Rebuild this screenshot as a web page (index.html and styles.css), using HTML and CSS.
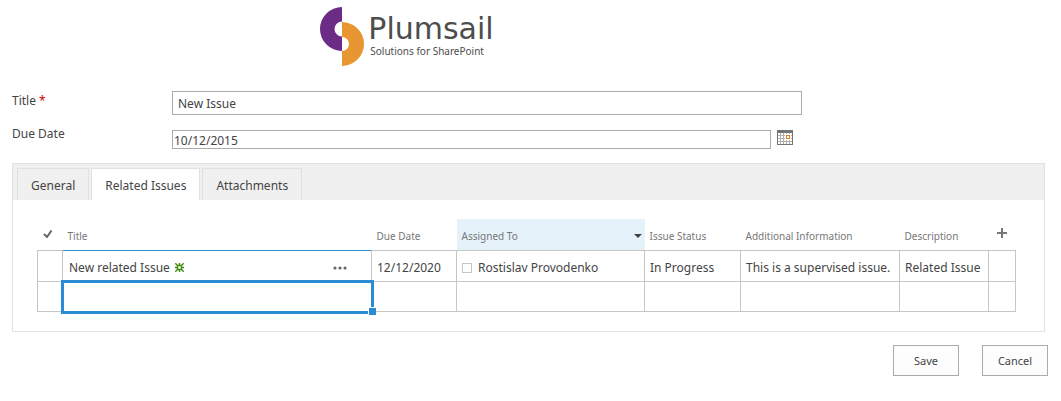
FILE: index.html
```html
<!DOCTYPE html>
<html lang="en">
<head>
    <meta charset="UTF-8">
    <meta name="viewport" content="width=device-width, initial-scale=1.0">
    <title>New Issue</title>
    <link rel="stylesheet" href="styles.css">
</head>
<body>
    <form class="issue-form">
        <div class="form-head">
            <div class="logo">
                <svg class="logo-mark" width="44" height="60" viewBox="0 0 44 60" aria-hidden="true">
                    <path fill="#6a2c85" d="M22 0a22 22 0 0 0 0 44V29.500a7.500 7.500 0 0 1 0-15z"/>
                    <path fill="#e79632" d="M22 15a22 22 0 0 1 0 44V44a7 7 0 0 0 0-14z"/>
                </svg>
                <div class="logo-text">
                    <span class="logo-name">Plumsail</span>
                    <span class="logo-tagline">Solutions for SharePoint</span>
                </div>
            </div>
            <div class="field">
                <label for="title">Title <span class="required">*</span></label>
                <input class="text-input" type="text" id="title" value="New Issue">
            </div>
            <div class="field">
                <label for="dueDate">Due Date</label>
                <input class="date-input" type="text" id="dueDate" value="10/12/2015">
                <button type="button" class="calendar-button" aria-label="Pick a date">
                    <svg width="16" height="15" viewBox="0 0 16 15" shape-rendering="crispEdges">
                        <path fill="none" stroke="#b0b0b0" d="M3.500 3v11M6.500 3v11M9.500 3v11M12.500 3v11M1 5.500h14M1 8.500h14M1 11.500h14"/>
                        <path fill="#fff" d="M8 4h6v6H8z"/>
                        <path fill="none" stroke="#e87b1e" d="M9.500 5.500h3v3h-3z"/>
                        <path fill="#737373" d="M0 0h16v15H0zM1 3v11h14V3z" fill-rule="evenodd"/>
                    </svg>
                </button>
            </div>
        </div>

        <div class="panel">
            <div class="tabs" role="tablist">
                <button type="button" class="tab" role="tab">General</button>
                <button type="button" class="tab active" role="tab" aria-selected="true">Related Issues</button>
                <button type="button" class="tab" role="tab">Attachments</button>
            </div>
            <div class="tab-content">
                <table class="grid">
                    <colgroup>
                        <col class="col-check">
                        <col>
                        <col class="col-date">
                        <col class="col-person">
                        <col class="col-status">
                        <col class="col-info">
                        <col class="col-description">
                        <col class="col-add">
                    </colgroup>
                    <thead>
                        <tr>
                            <th class="icon-cell check-cell">
                                <svg width="10" height="8" viewBox="0 0 10 8"><path fill="none" stroke="#666" stroke-width="2" d="M1 4l3 3 4.500-6.500"/></svg>
                            </th>
                            <th>Title</th>
                            <th>Due Date</th>
                            <th class="sorted">
                                <div class="cell-row">Assigned To
                                    <svg width="8" height="4" viewBox="0 0 8 4"><path fill="#444" d="M0 0h8L4 4z"/></svg>
                                </div>
                            </th>
                            <th>Issue Status</th>
                            <th>Additional Information</th>
                            <th>Description</th>
                            <th class="icon-cell">
                                <svg width="10" height="10" viewBox="0 0 10 10" shape-rendering="crispEdges"><path fill="#777" d="M4 0h2v4h4v2H6v4H4V6H0V4h4z"/></svg>
                            </th>
                        </tr>
                    </thead>
                    <tbody>
                        <tr>
                            <td></td>
                            <td class="title-cell">
                                <div class="cell-row">
                                    <span class="item-title">New related Issue
                                        <svg width="9" height="9" viewBox="0 0 9 9"><path fill="none" stroke="#3f8c0c" stroke-width="1.400" d="M2.500 2.500h4v4h-4zM.3.300l2.200 2.200M8.700.300L6.500 2.500M.3 8.700l2.200-2.200M8.700 8.700L6.500 6.500M4.500 0v2M4.500 7v2M0 4.500h2M7 4.500h2"/></svg>
                                    </span>
                                    <button type="button" class="more-button" aria-label="Open menu">
                                        <svg width="14" height="4" viewBox="0 0 14 4"><g fill="#666"><circle cx="2" cy="2" r="1.600"/><circle cx="7" cy="2" r="1.600"/><circle cx="12" cy="2" r="1.600"/></g></svg>
                                    </button>
                                </div>
                            </td>
                            <td>12/12/2020</td>
                            <td><span class="presence"></span>Rostislav Provodenko</td>
                            <td>In Progress</td>
                            <td>This is a supervised issue.</td>
                            <td>Related Issue</td>
                            <td></td>
                        </tr>
                        <tr class="new-row">
                            <td></td>
                            <td class="selected"><span class="selection"></span></td>
                            <td></td>
                            <td></td>
                            <td></td>
                            <td></td>
                            <td></td>
                            <td></td>
                        </tr>
                    </tbody>
                </table>
            </div>
        </div>

        <div class="actions">
            <button type="submit" class="action-button">Save</button>
            <button type="button" class="action-button">Cancel</button>
        </div>
    </form>
</body>
</html>
```
FILE: styles.css
```css
* {
    box-sizing: border-box;
}
body {
    margin: 0;
    background-color: #fff;
    color: #444;
    font-family: "Noto Sans", "Open Sans", sans-serif;
    font-size: 12px;
    line-height: 16px;
}
button, input {
    color: #444;
    font: inherit;
}
svg {
    flex: none;
}
.issue-form {
    padding: 7px 13px 24px 12px;
}
.form-head {
    max-width: 790px;
}
.logo {
    display: flex;
    justify-content: center;
    gap: 4px;
    height: 84px;
}
.logo-text {
    display: flex;
    flex-direction: column;
    padding-top: 5px;
    color: #4d4d4d;
}
.logo-name {
    font-family: "DejaVu Sans", Verdana, sans-serif;
    font-size: 30px;
    line-height: 33px;
}
.logo-tagline {
    padding-left: 2px;
    font-size: 10px;
    line-height: 12px;
}
.field {
    display: flex;
    align-items: flex-start;
}
.field label {
    flex: none;
    width: 160px;
    padding-top: 2px;
}
.required {
    color: #c00;
}
.text-input, .date-input {
    flex: 1;
    min-width: 0;
    border: 1px solid #ababab;
    background-color: #fff;
}
.text-input {
    height: 24px;
    padding: 0 5px;
    margin-bottom: 9px;
}
.date-input {
    height: 19px;
    padding: 1px 1px 0;
}
.date-input, .calendar-button {
    margin-top: 6px;
    margin-bottom: 14px;
}
.field .date-input + .calendar-button {
    margin-left: 6px;
    margin-right: 9px;
}
.calendar-button, .more-button {
    display: flex;
    padding: 0;
    border: none;
    background: none;
    cursor: pointer;
}
.panel {
    margin-right: 3px;
    border: 1px solid #e1e1e1;
}
.tabs {
    display: flex;
    gap: 2px;
    padding: 4px 4px 0;
    background-color: #f0f0f0;
}
.tab {
    height: 32px;
    padding: 2px 13px 0;
    border: 1px solid #e1e1e1;
    border-bottom: none;
    background-color: #f0f0f0;
    cursor: pointer;
}
.tab.active {
    background-color: #fff;
}
.tab-content {
    padding: 19px 28px 19px 24px;
}
.grid {
    width: 100%;
    table-layout: fixed;
    border-collapse: collapse;
}
.col-check {
    width: 25px;
}
.col-date {
    width: 85px;
}
.col-person {
    width: 188px;
}
.col-status {
    width: 96px;
}
.col-info {
    width: 159px;
}
.col-description {
    width: 89px;
}
.col-add {
    width: 27px;
}
.grid th {
    height: 31px;
    padding: 4px 5px 0;
    color: #777;
    font-size: 10px;
    font-weight: normal;
    text-align: left;
    white-space: nowrap;
}
.grid th.icon-cell {
    padding: 0;
    text-align: center;
}
.grid th.check-cell {
    padding-right: 4px;
}
.grid th.sorted {
    padding-right: 3px;
    background-color: #e5f2fa;
}
.grid td {
    height: 31px;
    padding: 4px 5px 0;
    border: 1px solid #c6c6c6;
    white-space: nowrap;
}
.grid .new-row td {
    height: 30px;
}
.grid td.title-cell {
    padding: 4px 24px 0 6px;
    border-top-color: #2a8dd4;
}
.cell-row {
    display: flex;
    align-items: center;
    justify-content: space-between;
}
.item-title {
    display: flex;
    align-items: center;
    gap: 5px;
}
.presence {
    display: inline-block;
    width: 10px;
    height: 10px;
    margin-right: 6px;
    border: 1px solid #c6c6c6;
    vertical-align: -1px;
}
.grid td.selected {
    position: relative;
}
/* selection frame drawn over the cell borders */
.selection {
    position: absolute;
    inset: -2px -3px -3px -2px;
    border: 3px solid #2a8dd4;
}
.selection::after {
    content: "";
    position: absolute;
    right: -5px;
    bottom: -4px;
    width: 7px;
    height: 7px;
    border: 1px solid #fff;
    border-right: none;
    border-bottom: none;
    background-color: #2a8dd4;
}
.actions {
    display: flex;
    justify-content: flex-end;
    gap: 23px;
    margin-top: 13px;
}
.action-button {
    width: 66px;
    height: 31px;
    padding: 1px 0 0;
    border: 1px solid #ababab;
    background-color: #fdfdfd;
    font-size: 11px;
    cursor: pointer;
}
```
